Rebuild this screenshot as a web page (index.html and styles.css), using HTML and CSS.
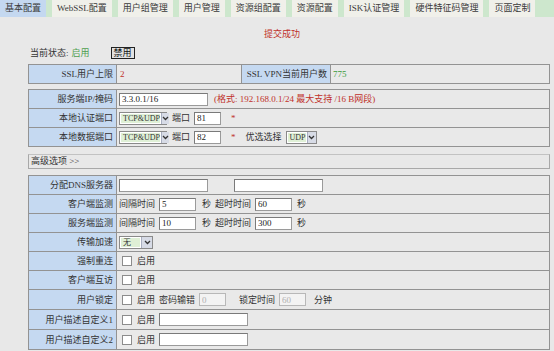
FILE: index.html
```html
<!DOCTYPE html>
<html lang="zh-CN">
<head>
  <meta charset="UTF-8">
  <title>基本配置</title>
  <link rel="stylesheet" href="styles.css">
</head>
<body>
  <div class="tabs">
    <a class="tab active">基本配置</a>
    <a class="tab">WebSSL配置</a>
    <a class="tab">用户组管理</a>
    <a class="tab">用户管理</a>
    <a class="tab">资源组配置</a>
    <a class="tab">资源配置</a>
    <a class="tab">ISK认证管理</a>
    <a class="tab">硬件特征码管理</a>
    <a class="tab">页面定制</a>
  </div>

  <p class="msg">提交成功</p>

  <div class="main">
    <div class="status">
      当前状态: <span class="on">启用</span>
      <button class="btn-off">禁用</button>
    </div>

    <table class="grid">
      <tr>
        <td class="lbl">SSL用户上限</td>
        <td class="val val-limit"><span class="red">2</span></td>
        <td class="lbl lbl-wide">SSL VPN当前用户数</td>
        <td class="val"><span class="green">775</span></td>
      </tr>
    </table>

    <table class="grid">
      <tr>
        <td class="lbl">服务端IP/掩码</td>
        <td class="val">
          <div class="f">
            <input class="txt w89" value="3.3.0.1/16">
            <span class="red hint">(格式: 192.168.0.1/24 最大支持 /16 B网段)</span>
          </div>
        </td>
      </tr>
      <tr>
        <td class="lbl">本地认证端口</td>
        <td class="val">
          <div class="f">
            <span class="sel w48"><span class="sel-val">TCP&amp;UDP</span><span class="sel-btn"><svg width="7" height="5" viewBox="0 0 7 5"><path d="M1 1l2.5 2.5L6 1" fill="none" stroke="#333" stroke-width="1.3"/></svg></span></span>
            <span class="ml5">端口</span>
            <input class="txt w27" value="81">
            <span class="red ml10">*</span>
          </div>
        </td>
      </tr>
      <tr>
        <td class="lbl">本地数据端口</td>
        <td class="val">
          <div class="f">
            <span class="sel w48"><span class="sel-val">TCP&amp;UDP</span><span class="sel-btn"><svg width="7" height="5" viewBox="0 0 7 5"><path d="M1 1l2.5 2.5L6 1" fill="none" stroke="#333" stroke-width="1.3"/></svg></span></span>
            <span class="ml5">端口</span>
            <input class="txt w27" value="82">
            <span class="red ml10">*</span>
            <span class="ml10">优选选择</span>
            <span class="sel w31"><span class="sel-val">UDP</span><span class="sel-btn"><svg width="7" height="5" viewBox="0 0 7 5"><path d="M1 1l2.5 2.5L6 1" fill="none" stroke="#333" stroke-width="1.3"/></svg></span></span>
          </div>
        </td>
      </tr>
    </table>

    <div class="adv">高级选项 &gt;&gt;</div>

    <table class="grid">
      <tr>
        <td class="lbl">分配DNS服务器</td>
        <td class="val">
          <div class="f">
            <input class="txt w89">
            <input class="txt w89 ml26">
          </div>
        </td>
      </tr>
      <tr>
        <td class="lbl">客户端监测</td>
        <td class="val">
          <div class="f">
            <span>间隔时间</span>
            <input class="txt w37" value="5">
            <span class="ml6">秒</span>
            <span>超时时间</span>
            <input class="txt w37" value="60">
            <span class="ml5">秒</span>
          </div>
        </td>
      </tr>
      <tr>
        <td class="lbl">服务端监测</td>
        <td class="val">
          <div class="f">
            <span>间隔时间</span>
            <input class="txt w37" value="10">
            <span class="ml6">秒</span>
            <span>超时时间</span>
            <input class="txt w37" value="300">
            <span class="ml5">秒</span>
          </div>
        </td>
      </tr>
      <tr>
        <td class="lbl">传输加速</td>
        <td class="val">
          <div class="f">
            <span class="sel w34"><span class="sel-val">无</span><span class="sel-btn"><svg width="7" height="5" viewBox="0 0 7 5"><path d="M1 1l2.5 2.5L6 1" fill="none" stroke="#333" stroke-width="1.3"/></svg></span></span>
          </div>
        </td>
      </tr>
      <tr>
        <td class="lbl">强制重连</td>
        <td class="val"><div class="f"><input type="checkbox" class="chk"><span>启用</span></div></td>
      </tr>
      <tr>
        <td class="lbl">客户端互访</td>
        <td class="val"><div class="f"><input type="checkbox" class="chk"><span>启用</span></div></td>
      </tr>
      <tr class="tall">
        <td class="lbl">用户锁定</td>
        <td class="val">
          <div class="f">
            <input type="checkbox" class="chk"><span>启用</span>
            <span>密码输错</span>
            <input class="txt w27" value="0" disabled>
            <span class="ml12">锁定时间</span>
            <input class="txt w27" value="60" disabled>
            <span class="ml8">分钟</span>
          </div>
        </td>
      </tr>
      <tr class="tall">
        <td class="lbl">用户描述自定义1</td>
        <td class="val"><div class="f"><input type="checkbox" class="chk"><span>启用</span><input class="txt w89"></div></td>
      </tr>
      <tr class="tall">
        <td class="lbl">用户描述自定义2</td>
        <td class="val"><div class="f"><input type="checkbox" class="chk"><span>启用</span><input class="txt w89"></div></td>
      </tr>
    </table>
  </div>
</body>
</html>
```

FILE: styles.css
```css
* {
  box-sizing: border-box;
  margin: 0;
  padding: 0;
}

body {
  background-color: #e8e8e8;
  color: #333;
  font-family: "Liberation Serif", "Noto Sans CJK SC", serif;
  font-size: 9px;
  line-height: 12px;
}

.tabs {
  display: flex;
  gap: 6px;
  height: 17px;
  background-color: #cde7cd;
}

.tab {
  padding: 0 5px;
  line-height: 17px;
  color: #3a3a3a;
  background-color: #f0f0ea;
}

.tab.active {
  background-color: #c4d8f0;
}

.msg {
  margin-top: 11px;
  padding-left: 10px;
  text-align: center;
  color: #c0302a;
}

.main {
  padding: 0 4px 0 28px;
}

.status {
  display: flex;
  align-items: center;
  gap: 3px;
  margin-top: 7px;
  padding-left: 2px;
}

.on {
  color: #4f9e4f;
}

.btn-off {
  margin-left: 18px;
  height: 12px;
  padding: 0 2px;
  font: inherit;
  line-height: 10px;
  color: #111;
  background-color: #e2e2e2;
  border: 1px solid #222;
}

.grid {
  width: 522px;
  margin-top: 5px;
  border-collapse: collapse;
  border: 1px solid #aaaaaa;
  background-color: #e9e9e9;
}

.grid td {
  height: 19px;
  padding: 0 2px;
  border: 1px solid #939393;
  white-space: nowrap;
  vertical-align: middle;
}

.grid .tall td {
  height: 20px;
}

.grid .lbl {
  width: 88px;
  padding-right: 3px;
  text-align: right;
  background-color: #c5d9f1;
}

.grid .val-limit {
  width: 125px;
  padding-left: 3px;
}

.grid .lbl-wide {
  width: 89px;
}

.red {
  color: #c0302a;
}

.green {
  color: #3a9a3a;
}

.f {
  display: flex;
  align-items: center;
  gap: 4px;
}

.hint {
  margin-left: 2px;
}

.txt {
  height: 13px;
  padding: 0 2px;
  font: inherit;
  color: #222;
  background-color: #fff;
  border: 1px solid #9a9a9a;
  border-top-color: #7a7a7a;
  border-left-color: #7a7a7a;
  outline: none;
}

.txt:disabled {
  color: #b0b0b0;
  background-color: #f3f3f3;
  border-color: #b8b8b8;
}

.w27 { width: 27px; }
.w37 { width: 37px; }
.w89 { width: 89px; }

.ml5 { margin-left: 1px; }
.ml6 { margin-left: 2px; }
.ml8 { margin-left: 4px; }
.ml10 { margin-left: 6px; }
.ml12 { margin-left: 9px; }
.ml26 { margin-left: 22px; }

.sel {
  display: inline-flex;
  height: 13px;
  border: 1px solid #8a8a8a;
  background-color: #fff;
}

.w31 { width: 31px; }
.w34 { width: 34px; }
.w48 { width: 48px; }

.sel-val {
  flex: 1;
  margin: 1px;
  padding-left: 2px;
  line-height: 9px;
  font-size: 8px;
  background-color: #dff0d6;
}

.sel-btn {
  display: flex;
  align-items: center;
  justify-content: center;
  width: 11px;
  background-color: #d7dbe6;
  border-left: 1px solid #a8aec0;
}

.chk {
  appearance: none;
  width: 10px;
  height: 10px;
  margin: 0 1px 0 3px;
  background-color: #fff;
  border: 1px solid #8c8c8c;
}

.adv {
  width: 522px;
  height: 15px;
  margin-top: 7px;
  margin-bottom: 6px;
  padding-left: 2px;
  line-height: 13px;
  border: 1px solid #a8a8a8;
  border-top-color: #c2c2c2;
}

.adv + .grid {
  margin-top: 0;
}
```
